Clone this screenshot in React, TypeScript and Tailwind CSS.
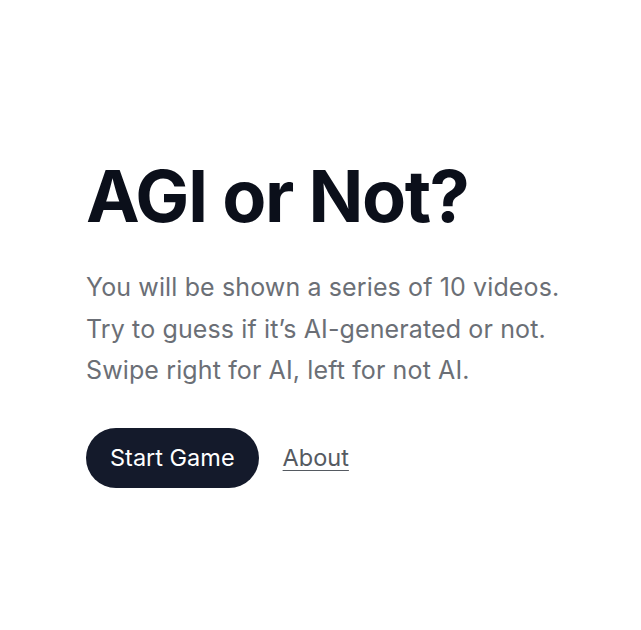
export default function App(): React.ReactElement {
  return (
    <main
      className="min-h-screen w-full bg-white px-[86px] pt-[160px]"
      style={{ fontFamily: "Inter, 'Noto Sans', sans-serif" }}
    >
      <h1 className="text-[72px] font-bold leading-none tracking-[-0.02em] text-[#0b0f1a]">
        AGI or Not?
      </h1>
      <p className="mt-[35px] whitespace-nowrap text-[25px] leading-[41.5px] tracking-[0.005em] text-[#6b6f76]">
        You will be shown a series of 10 videos.
        <br />
        Try to guess if it’s AI-generated or not.
        <br />
        Swipe right for AI, left for not AI.
      </p>
      <div className="mt-[36px] flex items-center gap-6">
        <button className="h-[60px] rounded-full bg-[#141a2b] px-6 text-[23.5px] text-white">
          Start Game
        </button>
        <a
          href="#"
          className="text-[23.5px] text-[#555a61] underline decoration-1 underline-offset-4"
        >
          About
        </a>
      </div>
    </main>
  );
}
